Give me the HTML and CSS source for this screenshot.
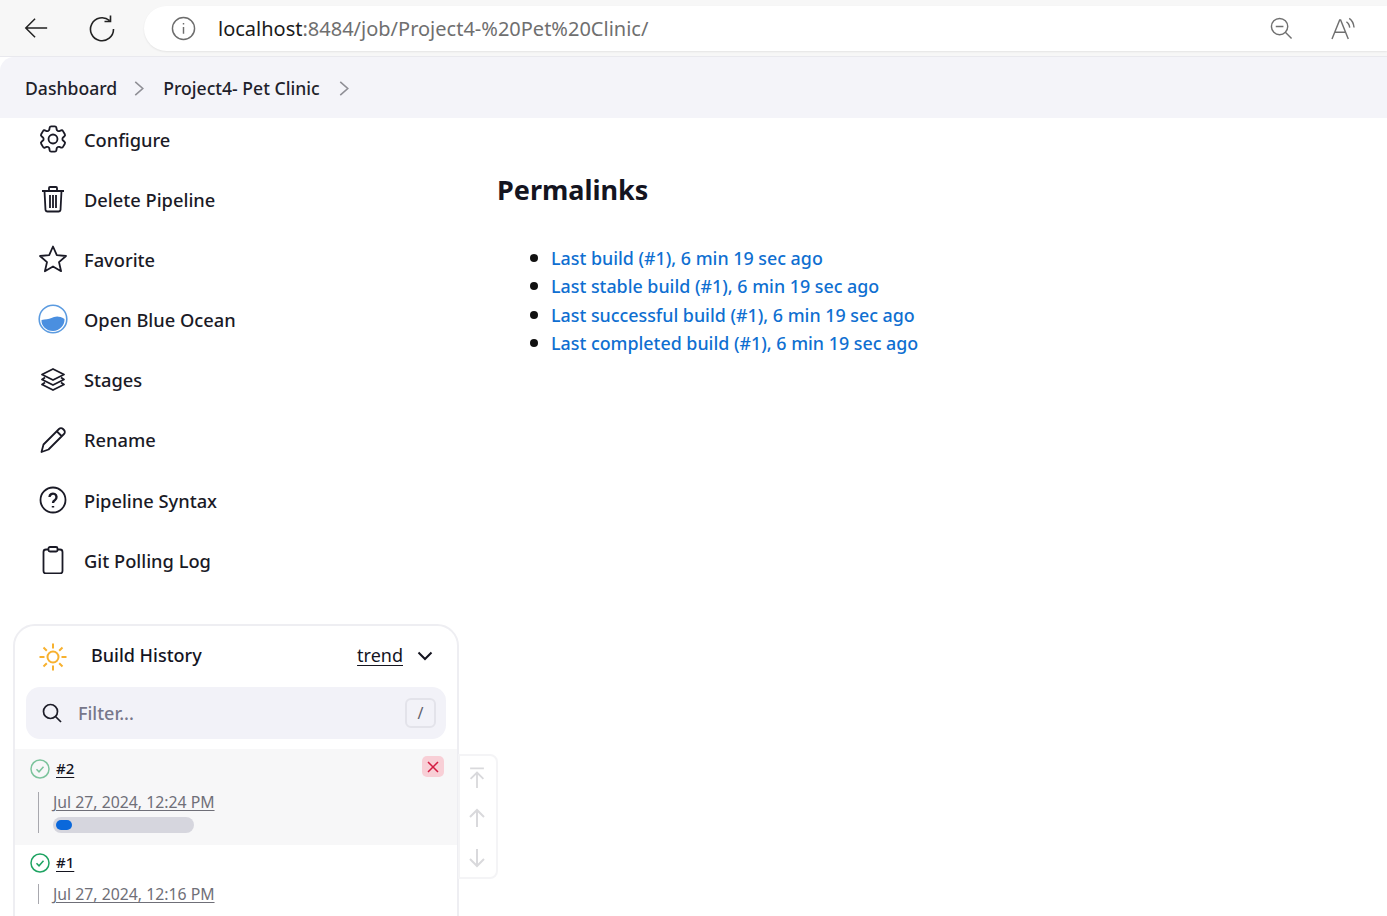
FILE: index.html
```html
<!DOCTYPE html>
<html lang="en">
<head>
  <meta charset="UTF-8" />
  <title>Project4- Pet Clinic</title>
  <link rel="stylesheet" href="styles.css">
</head>
<body>
  <header class="browser-bar">
    <svg class="nav-icon back" viewBox="0 0 28 28"><path d="M26 14H3M13 4 3 14l10 10"/></svg>
    <svg class="nav-icon reload" viewBox="0 0 28 28"><path d="M21.500 6.500A11.500 11.500 0 1 0 25.500 15M22.500 1.500v6h-6"/></svg>
    <div class="address">
      <svg class="info" viewBox="0 0 26 26"><circle cx="13" cy="13" r="11.500"/><path d="M13 11.500v7M13 7.200v1.600"/></svg>
      <span class="url"><span class="host">localhost</span>:8484/job/Project4-%20Pet%20Clinic/</span>
      <svg class="addr-icon zoom" viewBox="0 0 24 24"><circle cx="10" cy="10" r="8.500"/><path d="M6 10h8M16 16l6.500 6.500"/></svg>
      <svg class="addr-icon read" viewBox="0 0 26 24"><path d="M1 23 9 3h1l8 20M4 16h11M16 5c2 1 3 3 3.500 6M19 1.500c3 2 4.500 5 5 9.500"/></svg>
    </div>
  </header>

  <nav class="breadcrumb">
    <a>Dashboard</a>
    <svg class="crumb-arrow" viewBox="0 0 10 16"><path d="M1 1l8 7-8 7"/></svg>
    <a>Project4- Pet Clinic</a>
    <svg class="crumb-arrow" viewBox="0 0 10 16"><path d="M1 1l8 7-8 7"/></svg>
  </nav>

  <div class="layout">
    <aside class="sidebar">
      <ul class="tasks">
        <li class="task">
          <svg class="task-icon gear" viewBox="2 2 20 20"><path stroke-linejoin="round" d="M9.594 3.940c.090-.542.560-.940 1.110-.940h2.593c.550 0 1.020.398 1.110.940l.213 1.281c.063.374.313.686.645.870.074.040.147.083.220.127.325.196.720.257 1.075.124l1.217-.456a1.125 1.125 0 0 1 1.370.490l1.296 2.247a1.125 1.125 0 0 1-.260 1.431l-1.003.827c-.293.241-.438.613-.430.992a7.723 7.723 0 0 1 0 .255c-.008.378.137.750.430.991l1.004.827c.424.350.534.955.260 1.430l-1.298 2.247a1.125 1.125 0 0 1-1.369.491l-1.217-.456c-.355-.133-.750-.072-1.076.124a6.470 6.470 0 0 1-.220.128c-.331.183-.581.495-.644.869l-.213 1.281c-.090.543-.560.940-1.110.940h-2.594c-.550 0-1.019-.398-1.110-.940l-.213-1.281c-.062-.374-.312-.686-.644-.870a6.520 6.520 0 0 1-.220-.127c-.325-.196-.720-.257-1.076-.124l-1.217.456a1.125 1.125 0 0 1-1.369-.490l-1.297-2.247a1.125 1.125 0 0 1 .260-1.431l1.004-.827c.292-.240.437-.613.430-.991a6.932 6.932 0 0 1 0-.255c.007-.380-.138-.751-.430-.992l-1.004-.827a1.125 1.125 0 0 1-.260-1.430l1.297-2.247a1.125 1.125 0 0 1 1.370-.491l1.216.456c.356.133.751.072 1.076-.124.072-.044.146-.086.220-.128.332-.183.582-.495.644-.869l.214-1.280Z"/><circle cx="12" cy="12" r="3.200"/></svg>
          <span>Configure</span>
        </li>
        <li class="task">
          <svg class="task-icon" viewBox="0 0 28 28"><path d="M3 6h22M10 6V3a1 1 0 0 1 1-1h6a1 1 0 0 1 1 1v3M5.500 6l1 19a2 2 0 0 0 2 1.500h11a2 2 0 0 0 2-1.500l1-19M11 10v13M14 10v13M17 10v13"/></svg>
          <span>Delete Pipeline</span>
        </li>
        <li class="task">
          <svg class="task-icon" viewBox="0 0 28 28"><path d="M14 1.500l3.800 8.600 9.200.9-7 6.100 2.100 9.100L14 21.500l-8.100 4.700L8 17.100 1 11l9.200-.9z" stroke-linejoin="round"/></svg>
          <span>Favorite</span>
        </li>
        <li class="task">
          <svg class="task-icon ocean" viewBox="0 0 30 30"><circle cx="15" cy="15" r="13.800" fill="#fff" stroke="#5b9be0" stroke-width="1.600"/><path d="M3.500 16c4-1 7-.5 10-2 3-1.500 7-3 13 1 .5 6-5 12-11.500 12S3 22 3.500 16z" fill="#4a8fe0" stroke="none"/></svg>
          <span>Open Blue Ocean</span>
        </li>
        <li class="task">
          <svg class="task-icon" viewBox="0 0 28 28"><path d="M14 3 3 8.500 14 14l11-5.500zM6 11.500 3 13.500 14 19l11-5.500-3-2M6 16.500l-3 2L14 24l11-5.500-3-2" stroke-linejoin="round"/></svg>
          <span>Stages</span>
        </li>
        <li class="task">
          <svg class="task-icon" viewBox="0 0 28 28"><path d="M2.500 26l2-7.500L20 3a2.800 2.800 0 0 1 4 0l1 1a2.800 2.800 0 0 1 0 4L9.500 23.500zM18 5.500l4.500 4.500" stroke-linejoin="round"/></svg>
          <span>Rename</span>
        </li>
        <li class="task">
          <svg class="task-icon" viewBox="0 0 28 28"><circle cx="14" cy="14" r="12.500"/><path stroke-width="2.400" d="M10.500 11a3.500 3.500 0 1 1 5.500 3c-1.300.8-2 1.500-2 3M14 20v1.500"/></svg>
          <span>Pipeline Syntax</span>
        </li>
        <li class="task">
          <svg class="task-icon" viewBox="0 0 28 28"><rect x="4.500" y="3.500" width="19" height="24" rx="2.500"/><rect x="9.500" y="1" width="9" height="4.500" rx="1.500" fill="#fff"/></svg>
          <span>Git Polling Log</span>
        </li>
      </ul>

      <section class="history">
        <div class="history-head">
          <svg class="sun" viewBox="0 0 30 30"><circle cx="15" cy="15" r="5.500"/><path d="M15 1.500v5M15 23.500v5M1.500 15h5M23.500 15h5M5.500 5.500 8.800 8.800M21.200 21.200l3.300 3.300M5.500 24.500l3.300-3.300M21.200 8.800l3.300-3.300"/></svg>
          <span class="history-title">Build History</span>
          <a class="trend">trend</a>
          <svg class="chevron" viewBox="0 0 16 10"><path d="M1.500 1.500 8 8l6.500-6.500"/></svg>
        </div>
        <div class="filter">
          <svg class="filter-icon" viewBox="0 0 20 20"><circle cx="8.500" cy="8.500" r="7"/><path d="M13.500 13.500 19 19"/></svg>
          <span class="filter-text">Filter...</span>
          <kbd class="slash">/</kbd>
        </div>
        <div class="build running">
          <div class="build-top">
            <svg class="status faded" viewBox="0 0 20 20"><circle cx="10" cy="10" r="9"/><path d="M6.500 10.300 9 12.800l4.500-5"/></svg>
            <a class="build-no">#2</a>
          </div>
          <div class="build-detail">
            <a class="build-date">Jul 27, 2024, 12:24 PM</a>
            <div class="progress"><div class="progress-fill"></div></div>
          </div>
          <button class="cancel"><svg viewBox="0 0 12 12"><path d="M1 1l10 10M11 1 1 11"/></svg></button>
        </div>
        <div class="build">
          <div class="build-top">
            <svg class="status" viewBox="0 0 20 20"><circle cx="10" cy="10" r="9"/><path d="M6.500 10.300 9 12.800l4.500-5"/></svg>
            <a class="build-no">#1</a>
          </div>
          <div class="build-detail">
            <a class="build-date">Jul 27, 2024, 12:16 PM</a>
          </div>
        </div>
        <div class="scroller">
          <svg viewBox="0 0 18 24"><path d="M1.500 1.500h15M9 23V7M2 13l7-7 7 7"/></svg>
          <svg viewBox="0 0 18 20"><path d="M9 19V2M2 9l7-7 7 7"/></svg>
          <svg viewBox="0 0 18 20"><path d="M9 1v17M2 11l7 7 7-7"/></svg>
        </div>
      </section>
    </aside>

    <main class="content">
      <h2>Permalinks</h2>
      <ul class="permalinks">
        <li><a>Last build (#1), 6 min 19 sec ago</a></li>
        <li><a>Last stable build (#1), 6 min 19 sec ago</a></li>
        <li><a>Last successful build (#1), 6 min 19 sec ago</a></li>
        <li><a>Last completed build (#1), 6 min 19 sec ago</a></li>
      </ul>
    </main>
  </div>
</body>
</html>
```

FILE: styles.css
```css
html, body {
  height: 916px;
  overflow: hidden;
}

body {
  margin: 0;
  background: #fff;
  color: #14141f;
  font-family: "Noto Sans", "Open Sans", sans-serif;
}

svg {
  fill: none;
  stroke: currentColor;
  stroke-width: 2;
  flex: none;
  display: block;
}

ul {
  list-style: none;
  margin: 0;
  padding: 0;
}

.browser-bar {
  height: 57px;
  background: #f7f7f7;
  display: flex;
  align-items: center;
  padding-left: 23px;
  box-sizing: border-box;
  border-bottom: 1px solid #e9e9ee;
}

.nav-icon {
  color: #222;
  stroke-width: 1.600;
}

.back {
  width: 26px;
  height: 26px;
  margin-right: 39px;
}

.reload {
  width: 28px;
  height: 28px;
  margin-right: 28px;
}

.address {
  flex: 1;
  height: 45px;
  background: #fff;
  border-radius: 23px 0 0 23px;
  display: flex;
  align-items: center;
  padding-left: 27px;
  box-shadow: 0 1px 2px rgba(0, 0, 0, 0.08);
}

.info {
  width: 25px;
  height: 25px;
  color: #6d6d6d;
  stroke-width: 1.500;
}

.url {
  margin-left: 22px;
  font-size: 20px;
  color: #6f6f6f;
  flex: 1;
}

.host {
  color: #1a1a1a;
}

.addr-icon {
  color: #707070;
  stroke-width: 1.500;
  height: 23px;
  width: 23px;
}

.zoom {
  margin-right: 38px;
}

.read {
  width: 25px;
  margin-right: 31px;
}

.breadcrumb {
  height: 61px;
  box-sizing: border-box;
  padding: 1px 0 0 25px;
  background: #f4f4f9;
  border-radius: 14px 0 0 0;
  display: flex;
  align-items: center;
  font-size: 17.600px;
  font-weight: 500;
  color: #1f1f2b;
}

.crumb-arrow {
  width: 10px;
  height: 15px;
  color: #8f8f96;
  margin: 0 19px;
  stroke-width: 1.700;
}

.crumb-arrow:first-of-type {
  margin-left: 17px;
}

.layout {
  display: flex;
  align-items: flex-start;
  height: 798px;
  overflow: hidden;
}

.sidebar {
  width: 446px;
  margin-left: 13px;
  flex: none;
}

.task {
  height: 60.200px;
  box-sizing: border-box;
  display: flex;
  align-items: center;
  padding: 0 0 2px 26px;
  font-size: 18.300px;
  font-weight: 500;
  color: #1a1a26;
}

.task:first-child {
  height: 52px;
  padding-bottom: 10px;
}

.task-icon {
  width: 28px;
  height: 28px;
  margin-right: 17px;
  stroke-width: 1.800;
}

.gear {
  stroke-width: 1.300;
}

.ocean {
  width: 30px;
  height: 30px;
  margin: 0 16px 0 -1px;
}

.tasks {
  margin-bottom: 33px;
}

.history {
  position: relative;
  box-sizing: border-box;
  width: 446px;
  height: 400px;
  border: 2px solid #eeeef2;
  border-radius: 22px;
  padding-top: 1px;
}

.history-head {
  height: 58px;
  box-sizing: border-box;
  padding: 0 0 2px 23px;
  display: flex;
  align-items: center;
  font-size: 18px;
  font-weight: 500;
}

.sun {
  width: 30px;
  height: 30px;
  color: #f7b12f;
  stroke-width: 2;
  margin: 4px 23px 0 0;
}

.history-title {
  flex: 1;
}

.trend {
  color: #14141f;
  font-weight: 400;
  text-decoration: underline;
  text-underline-offset: 3px;
  margin-right: 14px;
}

.chevron {
  width: 16px;
  height: 10px;
  margin: 2px 24px 0 0;
  stroke-width: 2;
}

.filter {
  margin: 2px 11px 0;
  height: 52px;
  background: #f2f2f8;
  border-radius: 14px;
  display: flex;
  align-items: center;
  padding: 0 10px 0 16px;
  font-size: 18px;
  font-weight: 500;
  color: #77778a;
}

.filter-icon {
  width: 20px;
  height: 20px;
  color: #1d1d28;
  margin-right: 16px;
  stroke-width: 1.700;
}

.filter-text {
  flex: 1;
}

.slash {
  box-sizing: border-box;
  width: 31px;
  height: 30px;
  border: 2px solid #e3e3ea;
  border-radius: 6px;
  text-align: center;
  line-height: 26px;
  font-family: inherit;
  font-size: 16px;
  font-weight: 400;
  color: #5f5f6d;
}

.build {
  position: relative;
  padding: 6px 0 0 15px;
}

.running {
  background: #f7f7f8;
  margin-top: 10px;
  padding-top: 8px;
  height: 96px;
  box-sizing: border-box;
}

.build-top {
  display: flex;
  align-items: center;
  height: 22px;
}

.status {
  width: 20px;
  height: 20px;
  color: #1ea362;
  margin-right: 6px;
  margin-top: 2px;
  stroke-width: 1.500;
}

.faded {
  color: #7cc39c;
}

.build-no {
  font-size: 15px;
  font-weight: 500;
  text-decoration: underline;
  text-underline-offset: 3px;
}

.build-detail {
  margin: 11px 0 0 8px;
  padding-left: 14px;
  border-left: 1px solid #a8a8ae;
}

.running .build-detail {
  margin-top: 13px;
}

.build-date {
  display: block;
  width: fit-content;
  font-size: 15.800px;
  line-height: 20px;
  color: #6f6f78;
  text-decoration: underline;
  text-underline-offset: 2px;
}

.progress {
  width: 141px;
  height: 16px;
  margin-top: 5px;
  background: #d6d6de;
  border-radius: 8px;
  padding: 3px;
  box-sizing: border-box;
}

.progress-fill {
  width: 16px;
  height: 10px;
  background: #0a68db;
  border-radius: 5px;
}

.cancel {
  position: absolute;
  top: 7px;
  right: 13px;
  width: 22px;
  height: 21px;
  padding: 5px;
  border: 0;
  border-radius: 5px;
  background: #f8cfd6;
  color: #d31c42;
}

.cancel svg {
  width: 12px;
  height: 12px;
  stroke-width: 1.500;
}

.scroller {
  position: absolute;
  top: 128px;
  left: 443px;
  width: 40px;
  height: 125px;
  box-sizing: border-box;
  background: #fff;
  border: 2px solid #f4f4f6;
  border-radius: 0 8px 8px 0;
  color: #d9d9dc;
  display: flex;
  flex-direction: column;
  align-items: center;
  justify-content: space-between;
  padding: 11px 2px 8px 0;
}

.scroller svg {
  width: 18px;
  height: 22px;
  stroke-width: 2;
}

.content {
  flex: 1;
  padding: 55px 0 0 38px;
}

h2 {
  margin: 0;
  font-size: 27px;
  line-height: 34px;
  font-weight: 700;
}

.permalinks {
  margin-top: 37px;
  padding-left: 33px;
  font-size: 17.850px;
  line-height: 28.300px;
  font-weight: 500;
}

.permalinks li {
  display: flex;
  align-items: center;
  gap: 13px;
}

.permalinks li::before {
  content: "";
  width: 8px;
  height: 8px;
  border-radius: 50%;
  background: #111;
}

.permalinks a {
  color: #0f6fd1;
}
```
